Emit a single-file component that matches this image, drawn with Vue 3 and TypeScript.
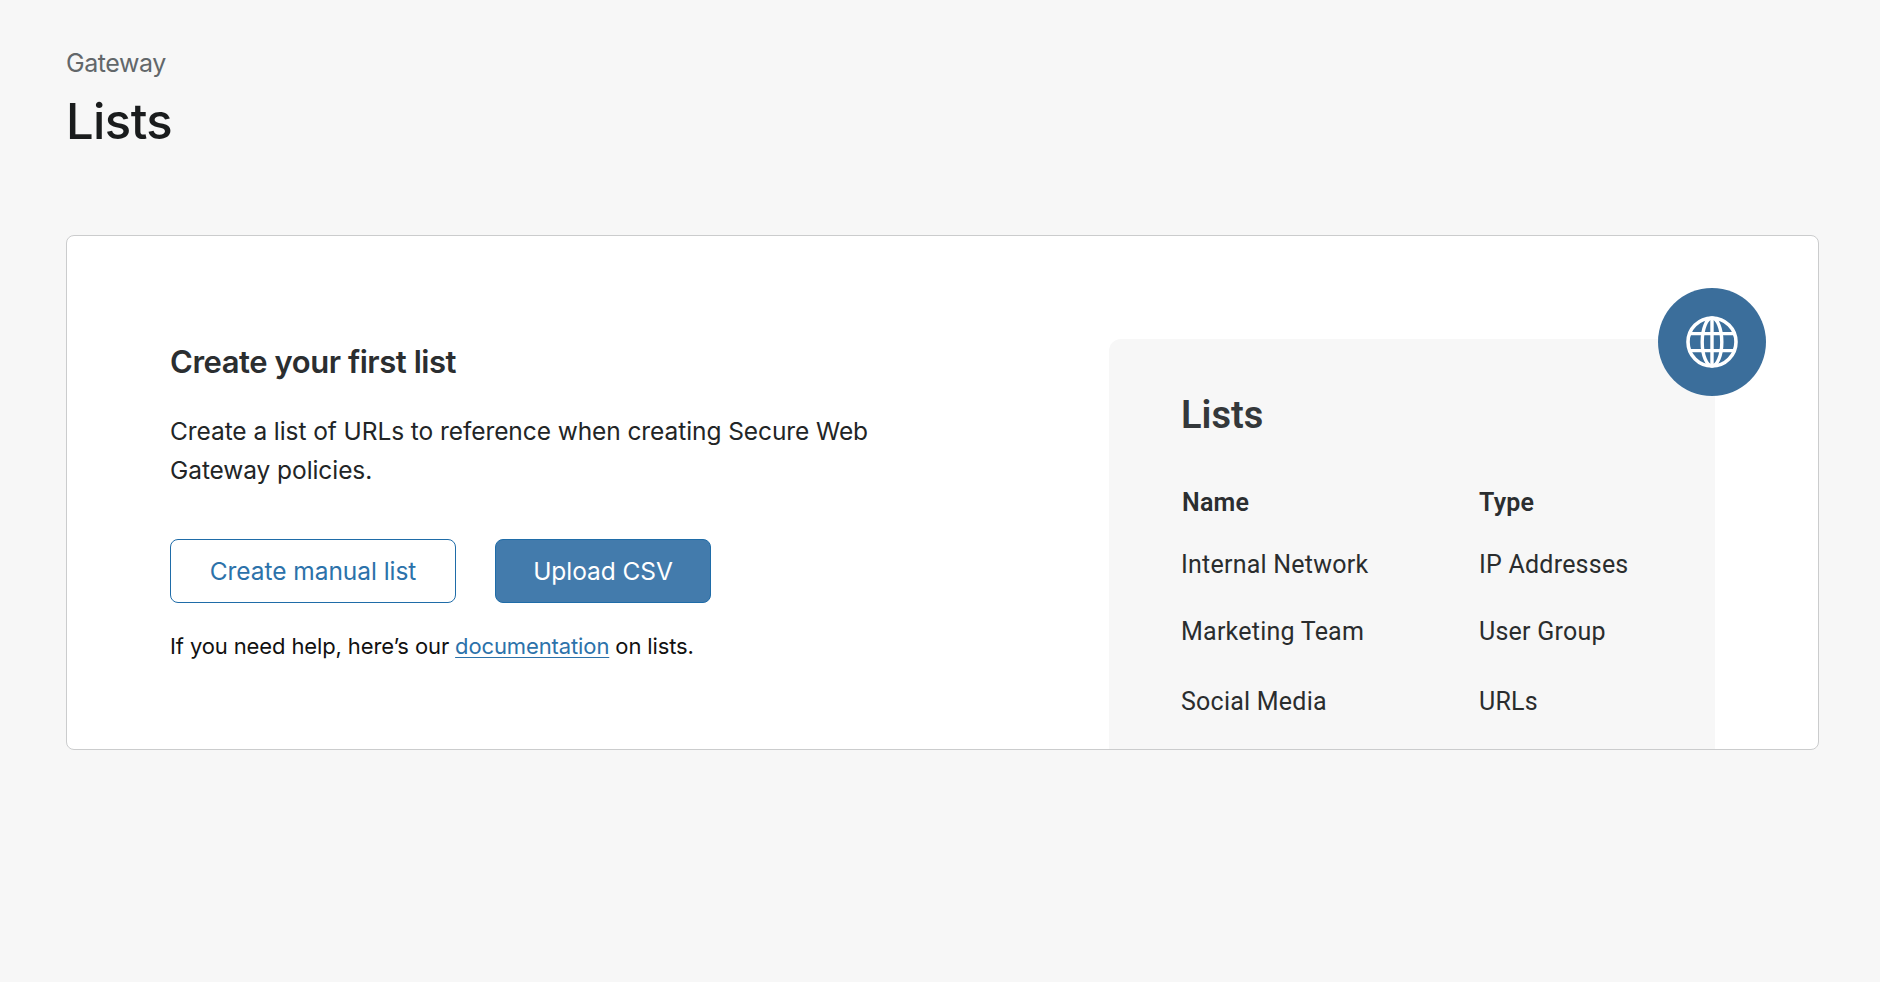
<script setup lang="ts">
interface ListRow {
  name: string
  type: string
}

const rows: ListRow[] = [
  { name: 'Internal Network', type: 'IP Addresses' },
  { name: 'Marketing Team', type: 'User Group' },
  { name: 'Social Media', type: 'URLs' },
]
</script>

<template>
  <main class="page">
    <header class="header">
      <div class="crumb">Gateway</div>
      <h1 class="title">Lists</h1>
    </header>

    <section class="card">
      <div class="intro">
        <h2 class="intro-title">Create your first list</h2>
        <p class="intro-text">
          Create a list of URLs to reference when creating Secure Web<br />Gateway policies.
        </p>
        <div class="actions">
          <button type="button" class="btn btn-outline">Create manual list</button>
          <button type="button" class="btn btn-solid">Upload CSV</button>
        </div>
        <p class="help">If you need help, here’s our <a href="#">documentation</a> on lists.</p>
      </div>

      <aside class="preview">
        <h3 class="preview-title">Lists</h3>
        <div class="row head"><span class="name">Name</span><span>Type</span></div>
        <div v-for="row in rows" :key="row.name" class="row">
          <span>{{ row.name }}</span><span>{{ row.type }}</span>
        </div>
        <div class="badge">
          <svg viewBox="0 0 52 52" width="52" height="52" fill="none" stroke="#fff" stroke-width="3.4">
            <circle cx="26" cy="26" r="24" stroke-width="3.6" />
            <ellipse cx="26" cy="26" rx="9.8" ry="24" />
            <path d="M26 2v48M4 17.6h44M4 34.6h44" />
          </svg>
        </div>
      </aside>
    </section>
  </main>
</template>

<style>
body {
  margin: 0;
  background: #f7f7f7;
}
</style>

<style scoped>
.page {
  box-sizing: border-box;
  width: 1880px;
  height: 982px;
  padding: 47px 61px 0 66px;
  background: #f7f7f7;
  color: #222526;
  font-family: Inter, "Liberation Sans", sans-serif;
  overflow: hidden;
}
h1, h2, h3, p {
  margin: 0;
}
.crumb {
  font-size: 25px;
  line-height: 32px;
  letter-spacing: -0.42px;
  color: #62676a;
}
.title {
  margin-top: 13px;
  font-size: 49px;
  line-height: 60px;
  font-weight: 500;
  letter-spacing: -0.6px;
  color: #1a1c1d;
}
.card {
  box-sizing: border-box;
  display: flex;
  justify-content: space-between;
  height: 515px;
  margin-top: 83px;
  padding: 0 103px 0 103px;
  border: 1px solid #cbcccd;
  border-radius: 8px;
  background: #fff;
}
.intro {
  padding-top: 106px;
}
.intro-title {
  font-size: 31px;
  line-height: 40px;
  font-weight: 600;
  letter-spacing: -0.45px;
  color: #2b2e30;
}
.intro-text {
  margin-top: 30px;
  font-size: 24.5px;
  line-height: 39px;
  letter-spacing: -0.08px;
  white-space: nowrap;
}
.actions {
  display: flex;
  gap: 39px;
  margin-top: 49px;
}
.btn {
  box-sizing: border-box;
  height: 64px;
  padding: 0;
  border: 1px solid #1f6ca8;
  border-radius: 8px;
  font: 400 24.5px/30px Inter, "Liberation Sans", sans-serif;
  letter-spacing: -0.06px;
}
.btn-outline {
  width: 286px;
  background: #fff;
  color: #2c72aa;
}
.btn-solid {
  width: 216px;
  background: #437bac;
  color: #fff;
}
.help {
  margin-top: 28px;
  font-size: 22px;
  line-height: 30px;
  letter-spacing: -0.12px;
  white-space: nowrap;
  color: #111;
}
.help a {
  color: #2c72aa;
  text-decoration: underline;
  text-decoration-thickness: 1px;
  text-underline-offset: 3px;
}
.preview {
  position: relative;
  box-sizing: border-box;
  width: 606px;
  margin-top: 103px;
  padding: 54px 0 0 72px;
  border-radius: 12px 0 0 0;
  background: #f7f7f7;
  color: #2a2d2e;
  font-family: Roboto, "Liberation Sans", sans-serif;
}
.preview-title {
  margin-bottom: 51px;
  font-size: 38px;
  line-height: 44px;
  font-weight: 600;
  color: #34383a;
}
.row {
  display: grid;
  grid-template-columns: 298px 1fr;
  margin-bottom: 39.5px;
  font-size: 25px;
  line-height: 30px;
  letter-spacing: 0.23px;
}
.row:nth-of-type(2) {
  margin-bottom: 37px;
}
.row.head {
  margin-bottom: 32px;
  font-weight: 600;
  color: #2b2e30;
}
.name {
  padding-left: 1px;
}
.badge {
  position: absolute;
  top: -51.5px;
  right: -50.5px;
  display: flex;
  align-items: center;
  justify-content: center;
  width: 108px;
  height: 108px;
  border-radius: 50%;
  background: #3b6e9b;
}
</style>
